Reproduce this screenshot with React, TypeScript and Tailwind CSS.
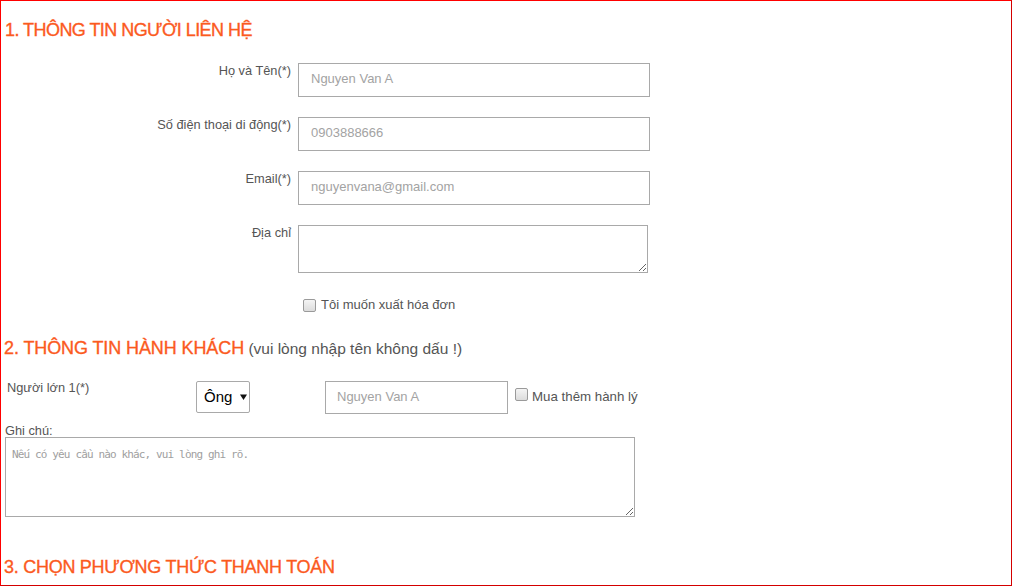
import React from "react";

const sans = { fontFamily: '"Liberation Sans", Arial, sans-serif' };

function Heading({ children, sub, cls }: { children: React.ReactNode; sub?: string; cls: string }) {
  return (
    <div className={`${cls} text-[18px] leading-[22px] text-[#fb5a1e] whitespace-nowrap [-webkit-text-stroke:0.35px_#fb5a1e]`}>
      {children}
      {sub && (
        <span className="text-[15.5px] tracking-normal text-[#555] [-webkit-text-stroke:0px_#555]"> {sub}</span>
      )}
    </div>
  );
}

function FieldRow({ label, children, mt }: { label: string; children: React.ReactNode; mt: string }) {
  return (
    <div className={`flex items-start ${mt}`}>
      <div className="w-[290px] text-right text-[12.8px] leading-[14px] mt-[1px] text-[#555] whitespace-nowrap">{label}</div>
      <div className="ml-[7px]">{children}</div>
    </div>
  );
}

function Check({ cls }: { cls: string }) {
  return (
    <span
      className={`${cls} block w-[13px] h-[13px] rounded-[2px] border border-[#9a9a9a] bg-gradient-to-b from-[#f4f4f4] to-[#dcdcdc] shrink-0`}
    />
  );
}

const inputCls =
  "block w-[352px] h-[34px] border border-[#a9a9a9] bg-white pl-[12px] pb-[3px] text-[13px] text-[#333] placeholder:text-[#a3a3a3] outline-none";

export default function App() {
  return (
    <div
      className="w-[1012px] h-[586px] overflow-hidden bg-white border-t border-l border-r border-b border-t-[#ff0000] border-l-[#ff0000] border-r-[#d40000] border-b-[#d40000]"
      style={sans}
    >
      <div className="pt-[18px]">
        <Heading cls="pl-[4px] tracking-[-0.55px]">1. THÔNG TIN NGƯỜI LIÊN HỆ</Heading>
      </div>

      <FieldRow label="Họ và Tên(*)" mt="mt-[22px]">
        <input className={inputCls} placeholder="Nguyen Van A" style={sans} />
      </FieldRow>
      <FieldRow label="Số điện thoại di động(*)" mt="mt-[20px]">
        <input className={inputCls} placeholder="0903888666" style={sans} />
      </FieldRow>
      <FieldRow label="Email(*)" mt="mt-[20px]">
        <input className={inputCls} placeholder="nguyenvana@gmail.com" style={sans} />
      </FieldRow>
      <FieldRow label="Địa chỉ" mt="mt-[20px]">
        <textarea className="block w-[350px] h-[48px] border border-[#a9a9a9] bg-white outline-none" />
      </FieldRow>

      <div className="flex items-center h-[16px] mt-[24px]">
        <div className="w-[297px]" />
        <Check cls="ml-[5px]" />
        <span className="ml-[5px] text-[13px] leading-[16px] text-[#555]">Tôi muốn xuất hóa đơn</span>
      </div>

      <div className="mt-[24px]">
        <Heading cls="pl-[3px] tracking-[-0.1px]" sub="(vui lòng nhập tên không dấu !)">
          2. THÔNG TIN HÀNH KHÁCH
        </Heading>
      </div>

      <div className="flex items-start mt-[21px]">
        <div className="w-[195px] pl-[6px] text-[12.8px] leading-[14px] text-[#555] whitespace-nowrap">Người lớn 1(*)</div>
        <div className="w-[54px] h-[32px] border border-[#a9a9a9] rounded-[2px] bg-white flex items-center pl-[7px]">
          <span className="text-[15px] text-black leading-[18px]">Ông</span>
          <svg width="7" height="6" viewBox="0 0 7 6" className="ml-[8px]">
            <path d="M0 0.5 L7 0.5 L3.5 6 Z" fill="#111" />
          </svg>
        </div>
        <input
          className="block ml-[75px] w-[183px] h-[33px] border border-[#a9a9a9] bg-white pl-[11px] pb-[2px] text-[13px] placeholder:text-[#a3a3a3] outline-none"
          placeholder="Nguyen Van A"
          style={sans}
        />
        <Check cls="ml-[7px] mt-[7px]" />
        <span className="ml-[4px] mt-[9px] text-[13.3px] leading-[14px] text-[#555] whitespace-nowrap">Mua thêm hành lý</span>
      </div>

      <div className="mt-[11px] pl-[4px] text-[12.8px] leading-[12px] h-[12px] text-[#555]">Ghi chú:</div>
      <textarea
        className="block ml-[4px] w-[630px] h-[80px] border border-[#a9a9a9] bg-white pl-[6px] pt-[10px] text-[11px] tracking-[-0.86px] leading-[13px] placeholder:text-[#a0a0a0] outline-none"
        placeholder="Nếu có yêu cầu nào khác, vui lòng ghi rõ."
        style={{ fontFamily: '"DejaVu Sans Mono", monospace' }}
      />

      <div className="mt-[39px]">
        <Heading cls="pl-[3px] tracking-[-0.27px]">3. CHỌN PHƯƠNG THỨC THANH TOÁN</Heading>
      </div>
    </div>
  );
}
